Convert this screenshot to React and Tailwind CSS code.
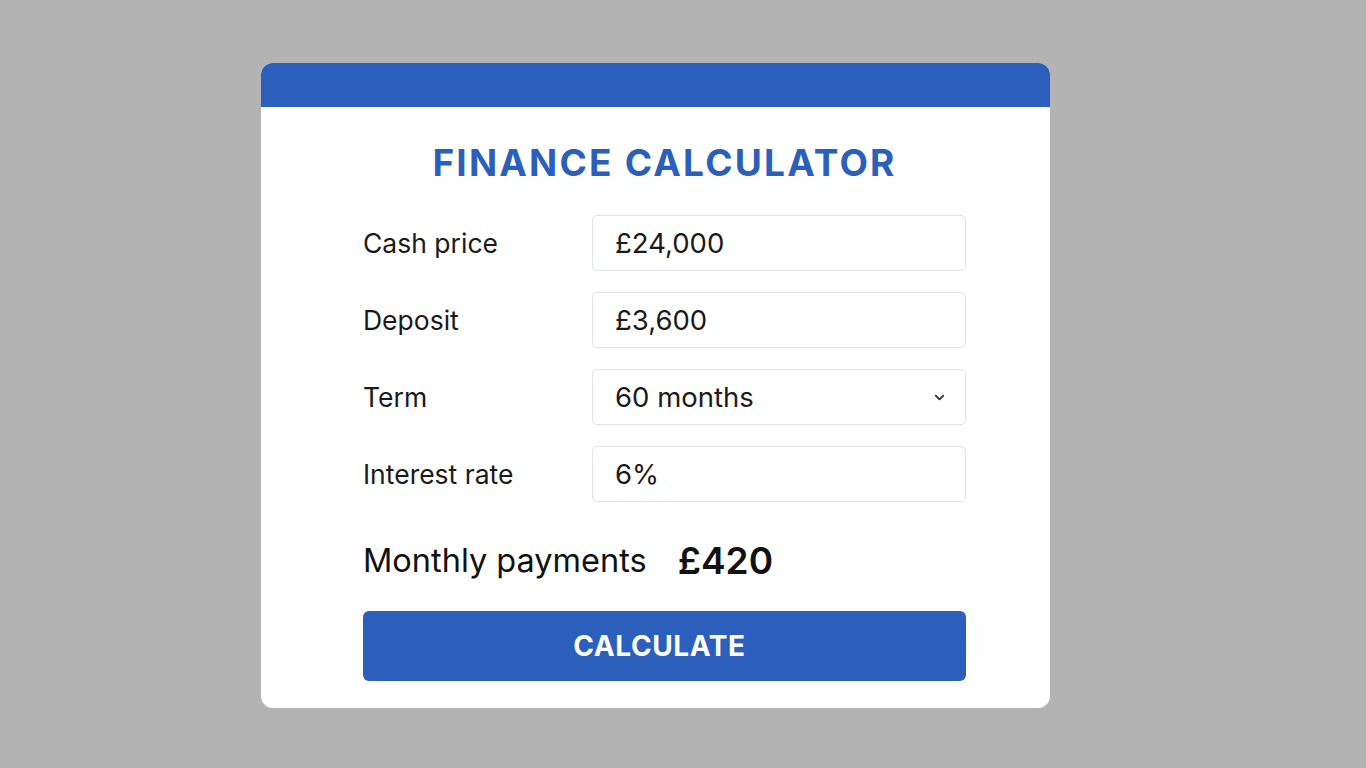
import { ChevronDown } from 'lucide-react'

const fields = [
  { label: 'Cash price', value: '£24,000' },
  { label: 'Deposit', value: '£3,600' },
  { label: 'Term', value: '60 months', select: true },
  { label: 'Interest rate', value: '6%' },
]

export default function App() {
  return (
    <div
      className="min-h-screen w-full bg-[#b3b3b3] flex pl-[261px] pt-[63px]"
      style={{ fontFamily: 'Inter, "Noto Sans", sans-serif' }}
    >
      <div className="w-[789px] h-[645px] bg-white rounded-[12px] overflow-hidden flex flex-col">
        <div className="h-[44px] bg-[#2c5fbc]" />

        <div className="pl-[102px] pr-[84px] pt-[34px]">
          <h1 className="text-center text-[37px] leading-[44px] font-bold text-[#2c5fbc] tracking-[2.2px]">
            FINANCE CALCULATOR
          </h1>

          <div className="mt-[30px] flex flex-col gap-[21px]">
            {fields.map(f => (
              <div key={f.label} className="flex items-center">
                <div className="w-[229px] text-[26.5px] leading-[32px] text-[#1a1a1a]">{f.label}</div>
                <div className="flex-1 h-[56px] border border-[#e0e3e7] rounded-[5px] flex items-center justify-between pl-[22px] pr-[18px] text-[27.5px] leading-[32px] text-[#1a1a1a]">
                  <span>{f.value}</span>
                  {f.select && <ChevronDown size={15} strokeWidth={3} className="text-[#333]" />}
                </div>
              </div>
            ))}
          </div>

          <div className="mt-[37px] h-[44px] flex items-center gap-[31px] text-[#111]">
            <span className="text-[32.5px] leading-[44px]">Monthly payments</span>
            <span className="text-[37px] leading-[44px] font-semibold">£420</span>
          </div>

          <button className="mt-[28px] w-full h-[70px] bg-[#2c5fbc] rounded-[6px] pr-[10px] text-white text-[28px] leading-[36px] font-bold tracking-[0.6px]">
            CALCULATE
          </button>
        </div>
      </div>
    </div>
  )
}
